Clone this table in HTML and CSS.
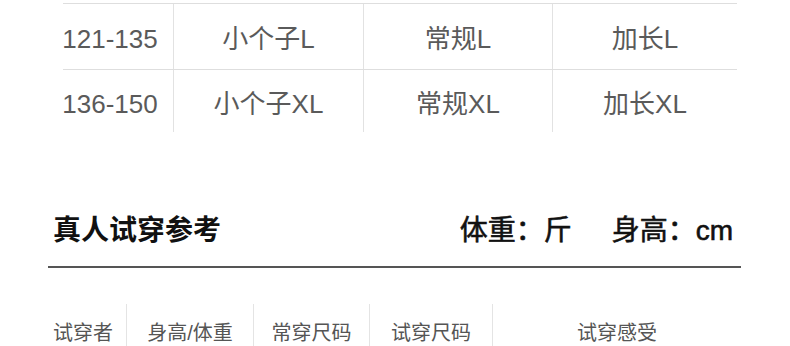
FILE: index.html
```html
<!DOCTYPE html>
<html lang="zh">
<head>
<meta charset="utf-8">
<link rel="stylesheet" href="styles.css">
</head>
<body>
<div class="page">
  <div class="size-table">
    <div class="size-row">
      <div class="cell first">121-135</div>
      <div class="cell">小个子L</div>
      <div class="cell">常规L</div>
      <div class="cell">加长L</div>
    </div>
    <div class="size-row last">
      <div class="cell first">136-150</div>
      <div class="cell">小个子XL</div>
      <div class="cell">常规XL</div>
      <div class="cell">加长XL</div>
    </div>
  </div>

  <div class="fit-section">
    <div class="fit-head">
      <div class="fit-title">真人试穿参考</div>
      <div class="fit-units"><span>体重：斤</span><span>身高：cm</span></div>
    </div>
    <div class="fit-cols">
      <div class="col c1">试穿者</div>
      <div class="col c2">身高/体重</div>
      <div class="col c3">常穿尺码</div>
      <div class="col c4">试穿尺码</div>
      <div class="col c5">试穿感受</div>
    </div>
  </div>
</div>
</body>
</html>
```

FILE: styles.css
```css
html, body {
  margin: 0;
  padding: 0;
  background: #ffffff;
}
body {
  font-family: "Liberation Sans", "Noto Sans CJK SC", sans-serif;
  width: 790px;
  height: 346px;
  overflow: hidden;
}
.page {
  padding-top: 3px;
}
.size-table {
  margin-left: 63px;
  width: 674px;
}
.size-row {
  display: grid;
  grid-template-columns: 110px 190px 189px 185px;
  height: 66px;
  border-top: 1px solid #dedede;
  box-sizing: border-box;
}
.size-row.last {
  height: 63px;
}
.cell {
  display: flex;
  align-items: center;
  justify-content: center;
  white-space: nowrap;
  padding-top: 5px;
  font-size: 26px;
  color: #5a5a5a;
  border-left: 1px solid #e2e2e2;
  line-height: 1;
}
.cell.first {
  border-left: none;
  padding-right: 16px;
}
.size-row.last .cell {
  padding-top: 6px;
}
.fit-section {
  margin-top: 68px;
  margin-left: 48px;
  width: 693px;
}
.fit-head {
  display: flex;
  justify-content: space-between;
  align-items: center;
  height: 68px;
  box-sizing: border-box;
  padding: 0 8px 4px 5px;
  border-bottom: 2px solid #555555;
}
.fit-title {
  font-size: 28px;
  font-weight: 700;
  color: #111111;
  line-height: 1;
}
.fit-units {
  display: flex;
  gap: 40px;
  font-size: 28px;
  font-weight: 400;
  color: #111111;
  -webkit-text-stroke: 0.6px #111111;
  line-height: 1;
}
.fit-cols {
  display: grid;
  grid-template-columns: 78px 127px 116px 123px 249px;
  margin-top: 36px;
  height: 42px;
}
.col {
  display: flex;
  justify-content: center;
  align-items: center;
  white-space: nowrap;
  font-size: 20px;
  color: #555555;
  border-left: 1px solid #e4e4e4;
  padding-top: 16px;
  line-height: 1;
}
.col.c1 {
  border-left: none;
  padding-right: 8px;
}
```
